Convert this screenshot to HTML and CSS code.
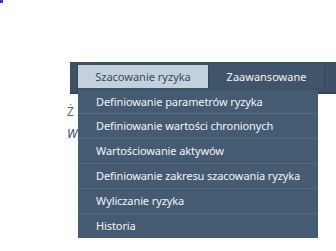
FILE: index.html
```html
<!DOCTYPE html>
<html lang="pl">
<head>
    <meta charset="UTF-8">
    <meta name="viewport" content="width=device-width, initial-scale=1.0">
    <title>Szacowanie ryzyka</title>
    <link rel="stylesheet" href="styles.css">
</head>
<body>

<span class="corner-icon"></span>

<div class="page">
    <div class="menubar">
        <span class="menubar-start"></span>
        <div class="menu-item active">
            Szacowanie ryzyka
            <!-- rozwinięte menu -->
            <ul class="dropdown">
                <li>Definiowanie parametrów ryzyka</li>
                <li>Definiowanie wartości chronionych</li>
                <li>Wartościowanie aktywów</li>
                <li>Definiowanie zakresu szacowania ryzyka</li>
                <li>Wyliczanie ryzyka</li>
                <li>Historia</li>
            </ul>
        </div>
        <div class="menu-item">Zaawansowane</div>
        <div class="menu-item rest"></div>
    </div>

    <div class="content">
        <p class="line">Ż</p>
        <p class="line note">W</p>
    </div>
</div>

</body>
</html>
```

FILE: styles.css
```css
body {
    margin: 0;
    padding: 0;
    background-color: #ffffff;
    font-family: "Noto Sans", "Open Sans", sans-serif;
    width: 336px;
    height: 251px;
    overflow: hidden;
    position: relative;
}
.corner-icon {
    position: absolute;
    top: 0;
    left: 0;
    width: 3px;
    height: 3px;
    background-color: #2b2bf5;
}
.page {
    padding: 62px 0 0 70px;
}
.menubar {
    display: flex;
    height: 27px;
    padding: 3px 0 0 0;
    background-color: #3e5267;
    border-bottom: 2px solid #34475a;
}
.menubar-start {
    flex-shrink: 0;
    width: 7px;
    border-right: 1px solid #34475a;
    margin-top: -3px;
}
.menu-item {
    position: relative;
    flex-shrink: 0;
    display: flex;
    align-items: center;
    justify-content: center;
    box-sizing: border-box;
    height: 23px;
    font-size: 11px;
    white-space: nowrap;
    color: #f2f4f6;
    border-right: 1px solid #34475a;
}
.menu-item.active {
    width: 131px;
    background-color: #c3d1dc;
    color: #3a4a5b;
}
.menu-item:nth-child(3) {
    width: 116px;
    background-color: #405569;
}
.menu-item.rest {
    flex: 1;
    border-right: none;
}
.dropdown {
    position: absolute;
    top: 25px;
    left: 0;
    width: 240px;
    box-sizing: border-box;
    margin: 0;
    padding: 0;
    list-style: none;
    background-color: #455b71;
    z-index: 10;
}
.dropdown li {
    height: 24px;
    line-height: 24px;
    padding-left: 18px;
    font-size: 11px;
    letter-spacing: -0.1px;
    white-space: nowrap;
    color: #f2f4f6;
    border-top: 1px solid #536a80;
}
.dropdown li:first-child {
    height: 23px;
    border-top: none;
}
.content {
    width: 10px;
    padding: 9px 0 0 0;
    margin-left: -3px;
}
.line {
    margin: 0 0 5px 0;
    font-size: 12px;
    line-height: 17px;
    color: #666666;
}
.note {
    font-style: italic;
    color: #33477d;
}
```
